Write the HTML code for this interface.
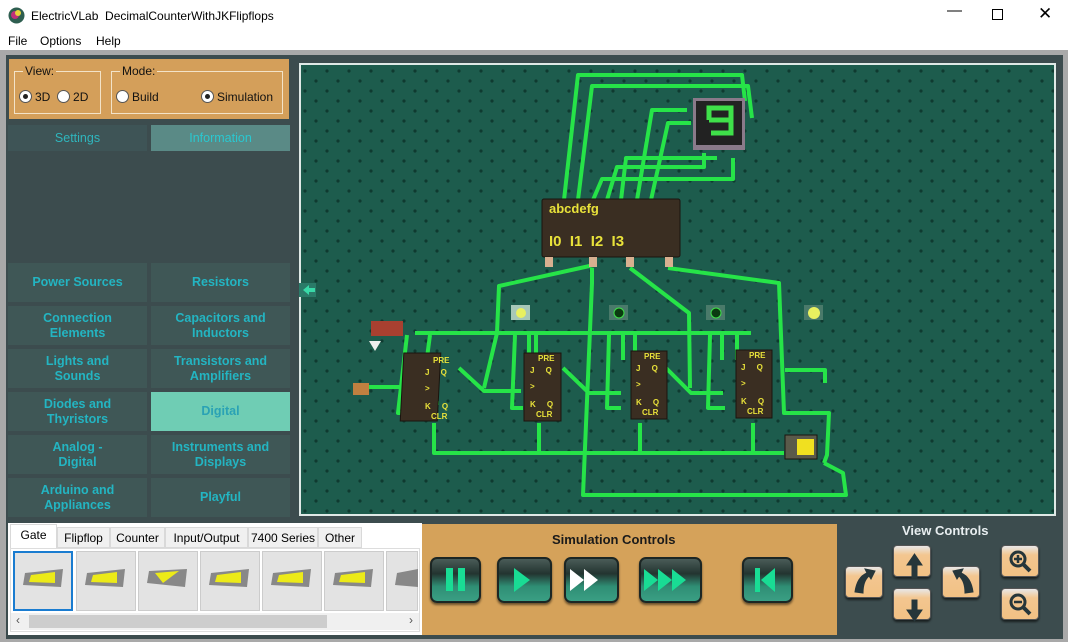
<!DOCTYPE html>
<html><head><meta charset="utf-8"><style>
*{margin:0;padding:0;box-sizing:border-box}
body{width:1068px;height:642px;overflow:hidden;background:#fff;font-family:"Liberation Sans",sans-serif;position:relative}
.abs{position:absolute}
.title{left:0;top:0;width:1068px;height:31px;background:#fff;font-size:12px;color:#000}
.menu{top:31px;left:0;width:1068px;height:19px;font-size:12px}
.frame{left:0;top:50px;width:1068px;height:592px;background:#a9a9a9}
.panel{left:6px;top:55px;width:1057px;height:584px;background:#3c4c4e}
.cat{position:absolute;width:139px;height:39px;background:#3f5756;color:#23b5c2;font-weight:bold;font-size:12.5px;text-align:center;display:flex;align-items:center;justify-content:center;line-height:15px}
.gb{position:absolute;border:1px solid #f3e3c8;font-size:12px;color:#111}
.gb span.l{position:absolute;top:-8px;left:8px;background:#d49f5a;padding:0 2px}
.rad{display:inline-block;width:13px;height:13px;border-radius:50%;background:#fff;border:1px solid #555;vertical-align:-2px;margin-right:3px;position:relative}
.rad.on:after{content:"";position:absolute;left:3px;top:3px;width:5px;height:5px;border-radius:50%;background:#222}
.tab{position:absolute;top:527px;height:21px;font-size:12px;border:1px solid #d9d9d9;background:#f0f0f0;padding-top:3px;text-align:center;white-space:nowrap}
.thumb{position:absolute;top:551px;width:60px;height:60px;background:#e3e3e3;border:1px solid #ccc}
.sbtn{position:absolute;top:557px;height:46px;border-radius:7px;background:linear-gradient(#4a5c58 0%,#233430 35%,#2f8e74 65%,#3a9f84 100%);border:2px solid #1c2624;box-shadow:0 2px 2px rgba(0,0,0,.5)}
.vbtn{position:absolute;width:38px;height:32px;border-radius:4px;background:linear-gradient(#e8e8e8 0%,#f3c690 30%,#f2c184 100%);border:1px solid #555;box-shadow:0 2px 2px rgba(0,0,0,.6)}
</style></head><body>
<div class="abs title">
<svg class="abs" style="left:8px;top:7px" width="17" height="17"><circle cx="8.5" cy="8.5" r="8" fill="#2e5e50"/><circle cx="7" cy="8" r="4" fill="#c0307a"/><circle cx="10" cy="6" r="3" fill="#e6d23a"/></svg>
<span class="abs" style="left:31px;top:9px">ElectricVLab&nbsp; DecimalCounterWithJKFlipflops</span>
<span class="abs" style="left:947px;top:2px;font-size:15px">—</span>
<span class="abs" style="left:992px;top:9px;width:11px;height:11px;border:1px solid #000"></span>
<span class="abs" style="left:1038px;top:4px;font-size:17px">✕</span>
</div>
<div class="abs menu"><span class="abs" style="left:8px;top:3px">File</span><span class="abs" style="left:40px;top:3px">Options</span><span class="abs" style="left:96px;top:3px">Help</span></div>
<div class="abs frame"></div>
<div class="abs panel"></div>
<div class="abs" style="left:9px;top:59px;width:280px;height:60px;background:#d49f5a"></div>
<div class="gb" style="left:14px;top:71px;width:87px;height:43px"><span class="l">View:</span><div style="position:absolute;left:4px;top:18px"><span class="rad on"></span>3D&nbsp; <span class="rad"></span>2D</div></div>
<div class="gb" style="left:111px;top:71px;width:172px;height:43px"><span class="l">Mode:</span><div style="position:absolute;left:4px;top:18px"><span class="rad"></span>Build</div><div style="position:absolute;left:89px;top:18px"><span class="rad on"></span>Simulation</div></div>
<div class="cat" style="left:8px;top:125px;height:26px;font-weight:normal;color:#2fb6bd;background:#3e5456">Settings</div>
<div class="cat" style="left:151px;top:125px;height:26px;font-weight:normal;color:#2ac8d0;background:#5a8a86">Information</div>
<div class="cat" style="left:8px;top:263px">Power Sources</div>
<div class="cat" style="left:151px;top:263px">Resistors</div>
<div class="cat" style="left:8px;top:306px">Connection<br>Elements</div>
<div class="cat" style="left:151px;top:306px">Capacitors and<br>Inductors</div>
<div class="cat" style="left:8px;top:349px">Lights and<br>Sounds</div>
<div class="cat" style="left:151px;top:349px">Transistors and<br>Amplifiers</div>
<div class="cat" style="left:8px;top:392px">Diodes and<br>Thyristors</div>
<div class="cat" style="left:151px;top:392px;background:#6fcdb4;color:#2aa2b5">Digital</div>
<div class="cat" style="left:8px;top:435px">Analog -<br>Digital</div>
<div class="cat" style="left:151px;top:435px">Instruments and<br>Displays</div>
<div class="cat" style="left:8px;top:478px">Arduino and<br>Appliances</div>
<div class="cat" style="left:151px;top:478px">Playful</div>
<svg class="abs" style="left:299px;top:63px" width="757" height="453">
<defs><pattern id="d" width="22" height="20" patternUnits="userSpaceOnUse"><circle cx="6" cy="8" r="1.6" fill="#0f3a30"/><circle cx="17" cy="18" r="1.6" fill="#0f3a30"/></pattern></defs>
<rect x="1" y="1" width="755" height="451" fill="#1d5c4d" stroke="#dfe9e6" stroke-width="2"/>
<rect x="2" y="2" width="753" height="449" fill="url(#d)"/>
<rect x="0" y="220" width="17" height="14" fill="#2a7a68"/><path d="M4 227 L10 222 V225 H16 V229 H10 V232 Z" fill="#39d9a8"/>
<g stroke="#26e448" stroke-width="4" fill="none" stroke-linejoin="round">
<path d="M265 137 L279 12 H443 L446 38"/><path d="M279 137 L293 23 H449 L453 55"/>
<path d="M294 137 L303 116 H434 L434 95"/><path d="M308 137 L318 104 H405 L405 90"/>
<path d="M322 137 L327 95 H418"/><path d="M338 137 L353 47 H388"/><path d="M352 137 L369 60 H392"/>
<path d="M295 202 L200 223 L198 270 L185 325"/>
<path d="M293 205 L293 220 L284 432 H547 L544 410 L525 400"/>
<path d="M331 205 L390 250 L391 325"/>
<path d="M369 205 L480 220 L485 350 H530 L528 392 L525 400"/>
<path d="M116 270 H452"/><path d="M131 272 L122 340 L140 340"/>
<path d="M108 272 L99 350 L120 350"/><path d="M70 324 H120"/>
<path d="M216 272 L213 345 H224"/><path d="M310 272 L308 345 H322"/><path d="M411 272 L409 345 H426"/>
<path d="M230 272 V300"/><path d="M237 272 V297"/><path d="M324 272 V297"/><path d="M336 272 V297"/><path d="M423 272 V297"/><path d="M438 272 V297"/>
<path d="M160 305 L185 328 H222"/><path d="M264 305 L290 330 H322"/><path d="M367 305 L392 330 H424"/>
<path d="M135 360 V390 H485"/><path d="M240 360 V390"/><path d="M341 360 V390"/><path d="M454 360 V390"/>
<path d="M486 307 H526 V320"/>
</g>
<g fill="#3a2e22" stroke="#1a140e">
<rect x="243" y="136" width="138" height="58" rx="2"/>
<rect x="120" y="290" width="37" height="68" transform="skewX(-3)"/>
<rect x="225" y="290" width="37" height="68"/>
<rect x="332" y="288" width="36" height="68"/>
<rect x="437" y="287" width="36" height="68"/>
<rect x="486" y="372" width="32" height="24" fill="#5a5a4a"/>
</g>
<g fill="#e9e23a" font-family="Liberation Sans" font-weight="bold">
<text x="250" y="150" font-size="13">abcdefg</text>
<text x="250" y="183" font-size="15">I0&nbsp; I1&nbsp; I2&nbsp; I3</text>
<g font-size="8"><text x="134" y="300">PRE</text><text x="126" y="312">J&nbsp;&nbsp;&nbsp;&nbsp;&nbsp;Q</text><text x="126" y="328">&gt;</text><text x="126" y="346">K&nbsp;&nbsp;&nbsp;&nbsp;&nbsp;Q</text><text x="132" y="356">CLR</text>
<text x="239" y="298">PRE</text><text x="231" y="310">J&nbsp;&nbsp;&nbsp;&nbsp;&nbsp;Q</text><text x="231" y="326">&gt;</text><text x="231" y="344">K&nbsp;&nbsp;&nbsp;&nbsp;&nbsp;Q</text><text x="237" y="354">CLR</text>
<text x="345" y="296">PRE</text><text x="337" y="308">J&nbsp;&nbsp;&nbsp;&nbsp;&nbsp;Q</text><text x="337" y="324">&gt;</text><text x="337" y="342">K&nbsp;&nbsp;&nbsp;&nbsp;&nbsp;Q</text><text x="343" y="352">CLR</text>
<text x="450" y="295">PRE</text><text x="442" y="307">J&nbsp;&nbsp;&nbsp;&nbsp;&nbsp;Q</text><text x="442" y="323">&gt;</text><text x="442" y="341">K&nbsp;&nbsp;&nbsp;&nbsp;&nbsp;Q</text><text x="448" y="351">CLR</text></g>
</g>
<g fill="#d8b090"><rect x="246" y="194" width="8" height="10"/><rect x="290" y="194" width="8" height="10"/><rect x="327" y="194" width="8" height="10"/><rect x="366" y="194" width="8" height="10"/></g>
<rect x="394" y="35" width="52" height="52" fill="#8a7a8a"/><rect x="397" y="38" width="46" height="44" fill="#222"/>
<path d="M410 57 V45 H432 V70 H412 M410 57 H432" stroke="#3fe04a" stroke-width="5" fill="none"/>
<rect x="212" y="242" width="19" height="15" fill="#a7c8b8"/><circle cx="222" cy="250" r="5" fill="#e8f060"/>
<rect x="310" y="242" width="19" height="15" fill="#4a7a6a"/><circle cx="320" cy="250" r="5" fill="#0a3a10" stroke="#3fe04a"/>
<rect x="407" y="242" width="19" height="15" fill="#4a7a6a"/><circle cx="417" cy="250" r="5" fill="#0a3a10" stroke="#3fe04a"/>
<rect x="505" y="242" width="19" height="15" fill="#4a7a6a"/><circle cx="515" cy="250" r="6" fill="#e8f060"/>
<rect x="72" y="258" width="32" height="15" fill="#a84030"/><path d="M70 278 L82 278 L76 288Z" fill="#eee"/>
<rect x="54" y="320" width="16" height="12" fill="#c08040"/>
<path d="M498 376 H515 V392 H498 Z" fill="#f0e020"/>
</svg>
<div class="abs" style="left:8px;top:523px;width:414px;height:112px;background:#fff"></div>
<div class="tab" style="left:10px;top:524px;height:24px;width:47px;background:#fff;border-bottom:none">Gate</div>
<div class="tab" style="left:57px;width:53px">Flipflop</div><div class="tab" style="left:110px;width:55px">Counter</div><div class="tab" style="left:165px;width:83px">Input/Output</div><div class="tab" style="left:248px;width:70px">7400 Series</div><div class="tab" style="left:318px;width:44px">Other</div>
<div class="abs" style="left:10px;top:548px;width:410px;height:84px;border:1px solid #ddd"></div>
<div class="thumb" style="left:13px;border:2px solid #1a7cd0"></div><div class="thumb" style="left:76px"></div><div class="thumb" style="left:138px"></div><div class="thumb" style="left:200px"></div><div class="thumb" style="left:262px"></div><div class="thumb" style="left:324px"></div><div class="thumb" style="left:386px;width:32px"></div>
<svg class="abs" style="left:13px;top:551px" width="405" height="60"><g fill="#888"><path d="M12 22 L50 18 L48 36 L10 34Z"/><path d="M74 22 L112 18 L110 36 L72 34Z"/><path d="M136 20 L174 18 L172 36 L134 32Z"/><path d="M198 22 L236 18 L234 36 L196 34Z"/><path d="M260 22 L298 18 L296 36 L258 34Z"/><path d="M322 22 L360 18 L358 36 L320 34Z"/><path d="M384 22 L405 18 L405 36 L382 34Z"/></g><g fill="#ecea18"><path d="M18 24 L42 21 L42 32 L16 31Z"/><path d="M80 24 L104 21 L104 32 L78 31Z"/><path d="M142 22 L166 20 L150 32Z"/><path d="M204 24 L228 21 L228 32 L202 31Z"/><path d="M266 24 L290 21 L290 32 L264 31Z"/><path d="M328 24 L352 21 L352 32 L326 31Z"/></g></svg>
<div class="abs" style="left:11px;top:613px;width:408px;height:17px;background:#f0f0f0;font-size:12px;color:#555"><span class="abs" style="left:5px;top:0">‹</span><div class="abs" style="left:18px;top:2px;width:298px;height:13px;background:#cdcdcd"></div><span class="abs" style="right:6px;top:0">›</span></div>
<div class="abs" style="left:422px;top:524px;width:415px;height:111px;background:#d5a25a"></div>
<div class="abs" style="left:552px;top:532px;font-weight:bold;font-size:13px;color:#1a1a1a">Simulation Controls</div>
<div class="sbtn" style="left:430px;width:51px"></div><div class="sbtn" style="left:497px;width:55px"></div><div class="sbtn" style="left:564px;width:55px"></div><div class="sbtn" style="left:639px;width:63px"></div><div class="sbtn" style="left:742px;width:51px"></div>
<svg class="abs" style="left:430px;top:557px" width="370" height="46"><g fill="#19dc94"><rect x="16" y="11" width="7" height="23"/><rect x="28" y="11" width="7" height="23"/><path d="M84 11 L100 23 L84 35Z"/><path d="M214 12 L228 23 L214 34Z M228 12 L242 23 L228 34Z M242 12 L256 23 L242 34Z"/><path d="M325 11 H330 V35 H325Z M345 11 L331 23 L345 35Z"/></g><path d="M140 12 L154 23 L140 34Z M154 12 L168 23 L154 34Z" fill="#fff"/></svg>
<div class="abs" style="left:902px;top:523px;font-weight:bold;font-size:13px;color:#e8eef0">View Controls</div>
<div class="vbtn" style="left:845px;top:566px"></div><div class="vbtn" style="left:893px;top:545px"></div><div class="vbtn" style="left:893px;top:588px"></div><div class="vbtn" style="left:942px;top:566px"></div><div class="vbtn" style="left:1001px;top:545px"></div><div class="vbtn" style="left:1001px;top:588px"></div>
<svg class="abs" style="left:845px;top:545px" width="200" height="80"><g fill="#26363a" stroke="#26363a"><path d="M10 47 Q12 32 22 28 L20 24 L30 26 L26 34 L24 31 Q18 36 18 48Z"/><path d="M67 20 V33 H72 V20 H77 L69.5 9 L62 20Z"/><path d="M67 55 V65 H62 L69.5 76 L77 65 H72 V55Z"/><path d="M128 47 Q126 32 116 28 L118 24 L108 26 L112 34 L114 31 Q120 36 120 48Z"/><circle cx="173" cy="14" r="7" fill="none" stroke-width="3"/><path d="M178 19 L185 26" stroke-width="4"/><path d="M169 14 H177 M173 10 V18" stroke="#26363a" stroke-width="2.5"/><circle cx="173" cy="57" r="7" fill="none" stroke-width="3"/><path d="M178 62 L185 69" stroke-width="4"/><path d="M169 57 H177" stroke-width="2.5"/></g></svg>
</body></html>
